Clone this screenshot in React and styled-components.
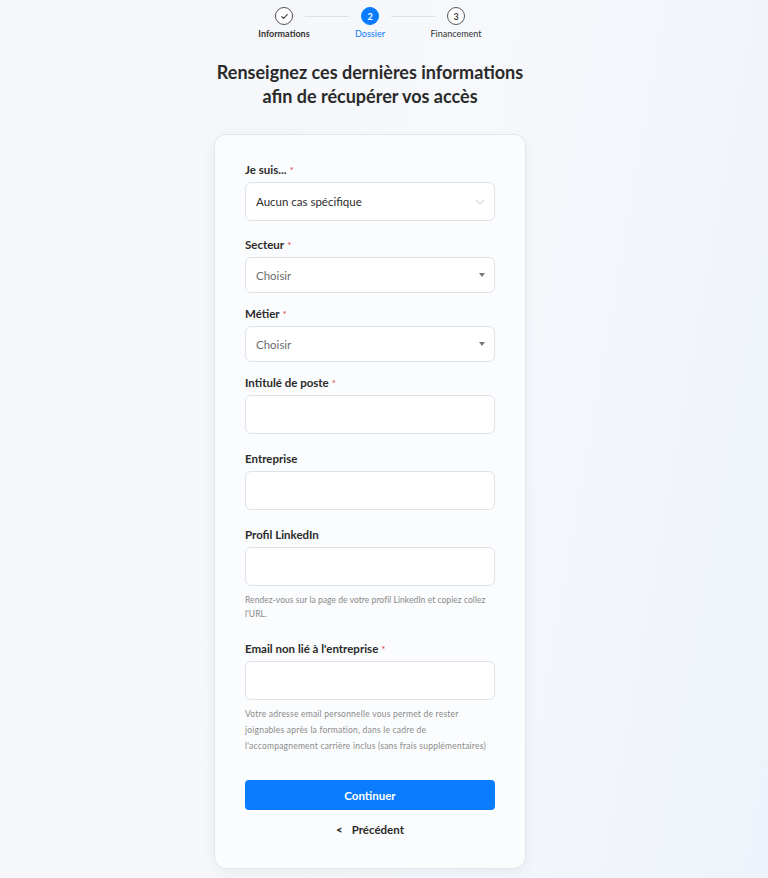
import React from "react";
import styled, { createGlobalStyle } from "styled-components";

const GlobalStyle = createGlobalStyle`
  html, body {
    margin: 0;
    padding: 0;
  }
  body {
    font-family: "Lato", "Noto Sans", sans-serif;
    color: #222;
    background: linear-gradient(100deg, #f4f6f9 0%, #f6f8fb 55%, #eef3fb 100%);
    min-height: 878px;
  }
`;

const Page = styled.div`
  display: flex;
  flex-direction: column;
  align-items: center;
  padding: 7px 28px 12px 0;
`;

const Stepper = styled.div`
  display: flex;
  align-items: flex-start;
`;

const Step = styled.div`
  display: flex;
  flex-direction: column;
  align-items: center;
  width: 58px;
  gap: 3px;
`;

const StepCircle = styled.div`
  width: 18px;
  height: 18px;
  border-radius: 50%;
  box-sizing: border-box;
  border: 1.2px solid ${p => (p.$active ? "#0a7cff" : "#555")};
  background: ${p => (p.$active ? "#0a7cff" : "#fff")};
  color: ${p => (p.$active ? "#fff" : "#444")};
  font-size: 9px;
  font-weight: 700;
  display: flex;
  align-items: center;
  justify-content: center;
`;

const StepLabel = styled.span`
  font-size: 9px;
  color: ${p => (p.$active ? "#0a7cff" : "#333")};
  font-weight: ${p => (p.$done ? 700 : 400)};
  white-space: nowrap;
`;

const StepLine = styled.div`
  width: 44px;
  height: 1px;
  background: #dde0e5;
  margin-top: 9px;
  margin-left: -8px;
  margin-right: -8px;
`;

const Title = styled.h1`
  margin: 21px 0 26px;
  font-size: 18px;
  line-height: 24px;
  font-weight: 700;
  text-align: center;
  color: #2a2a2a;
`;

const Card = styled.form`
  width: 312px;
  box-sizing: border-box;
  background: #fbfcfd;
  border: 1px solid #e2e6eb;
  border-radius: 12px;
  box-shadow: 0 4px 14px rgba(30, 50, 90, 0.06);
  padding: 28px 30px 31px;
  display: flex;
  flex-direction: column;
`;

const Field = styled.div`
  display: flex;
  flex-direction: column;
  margin-bottom: ${p => p.$gap || 17}px;
`;

const Label = styled.label`
  font-size: 11.5px;
  font-weight: 700;
  color: #2b2b2b;
  margin-bottom: 5px;
  line-height: 14px;

  & span {
    color: #e0474c;
    font-weight: 400;
    margin-left: 3px;
    font-size: 10px;
  }
`;

const Box = styled.div`
  height: ${p => p.$h || 39}px;
  box-sizing: border-box;
  background: #fff;
  border: 1px solid #dfe3e8;
  border-radius: 6px;
  display: flex;
  align-items: center;
  justify-content: space-between;
  padding: 0 9px 0 10px;
  font-size: 11.5px;
  color: ${p => (p.$placeholder ? "#6d6d6d" : "#2b2b2b")};
`;

const Help = styled.p`
  margin: ${p => p.$top || 7}px 0 0;
  font-size: 8.5px;
  letter-spacing: ${p => p.$ls ?? 0.22}px;
  line-height: ${p => p.$lh || 14}px;
  color: #8a8a8a;
  white-space: nowrap;
`;

const Button = styled.button`
  height: 30px;
  border: none;
  border-radius: 4px;
  background: #0a7cff;
  color: #fff;
  font-family: inherit;
  font-size: 11.5px;
  font-weight: 700;
`;

const Back = styled.div`
  margin-top: 13px;
  text-align: center;
  font-size: 11.5px;
  line-height: 14px;
  font-weight: 700;
  color: #2b2b2b;

  & b {
    margin-right: 9px;
  }
`;

const Chevron = () => (
  <svg width="10" height="6" viewBox="0 0 10 6" fill="none">
    <path d="M1 1l4 4 4-4" stroke="#c4c8ce" strokeWidth="1" />
  </svg>
);

const Caret = () => (
  <svg width="6" height="4" viewBox="0 0 6 4">
    <path d="M0 0h6L3 4z" fill="#777" />
  </svg>
);

const Check = () => (
  <svg width="9" height="9" viewBox="0 0 10 10" fill="none">
    <path d="M2 5.2l2 2 4-4.4" stroke="#444" strokeWidth="1.3" strokeLinecap="round" strokeLinejoin="round" />
  </svg>
);

const App = () => (
  <>
    <GlobalStyle />
    <Page>
      <Stepper>
        <Step>
          <StepCircle>
            <Check />
          </StepCircle>
          <StepLabel $done>Informations</StepLabel>
        </Step>
        <StepLine />
        <Step>
          <StepCircle $active>2</StepCircle>
          <StepLabel $active>Dossier</StepLabel>
        </Step>
        <StepLine />
        <Step>
          <StepCircle>3</StepCircle>
          <StepLabel>Financement</StepLabel>
        </Step>
      </Stepper>

      <Title>
        Renseignez ces dernières informations
        <br />
        afin de récupérer vos accès
      </Title>

      <Card>
        <Field>
          <Label>
            Je suis...<span>*</span>
          </Label>
          <Box>
            Aucun cas spécifique
            <Chevron />
          </Box>
        </Field>
        <Field $gap={14}>
          <Label>
            Secteur<span>*</span>
          </Label>
          <Box $h={36} $placeholder>
            Choisir
            <Caret />
          </Box>
        </Field>
        <Field $gap={14}>
          <Label>
            Métier<span>*</span>
          </Label>
          <Box $h={36} $placeholder>
            Choisir
            <Caret />
          </Box>
        </Field>
        <Field $gap={18}>
          <Label>
            Intitulé de poste<span>*</span>
          </Label>
          <Box />
        </Field>
        <Field $gap={18}>
          <Label>Entreprise</Label>
          <Box />
        </Field>
        <Field $gap={21}>
          <Label>Profil LinkedIn</Label>
          <Box />
          <Help $ls={0.05}>
            Rendez-vous sur la page de votre profil LinkedIn et copiez collez
            <br />
            l'URL.
          </Help>
        </Field>
        <Field $gap={26}>
          <Label>
            Email non lié à l'entreprise<span>*</span>
          </Label>
          <Box />
          <Help $lh={16} $top={6}>
            Votre adresse email personnelle vous permet de rester
            <br />
            joignables après la formation, dans le cadre de
            <br />
            l'accompagnement carrière inclus (sans frais supplémentaires)
          </Help>
        </Field>
        <Button type="button">Continuer</Button>
        <Back>
          <b>&lt;</b>Précédent
        </Back>
      </Card>
    </Page>
  </>
);

export default App;
